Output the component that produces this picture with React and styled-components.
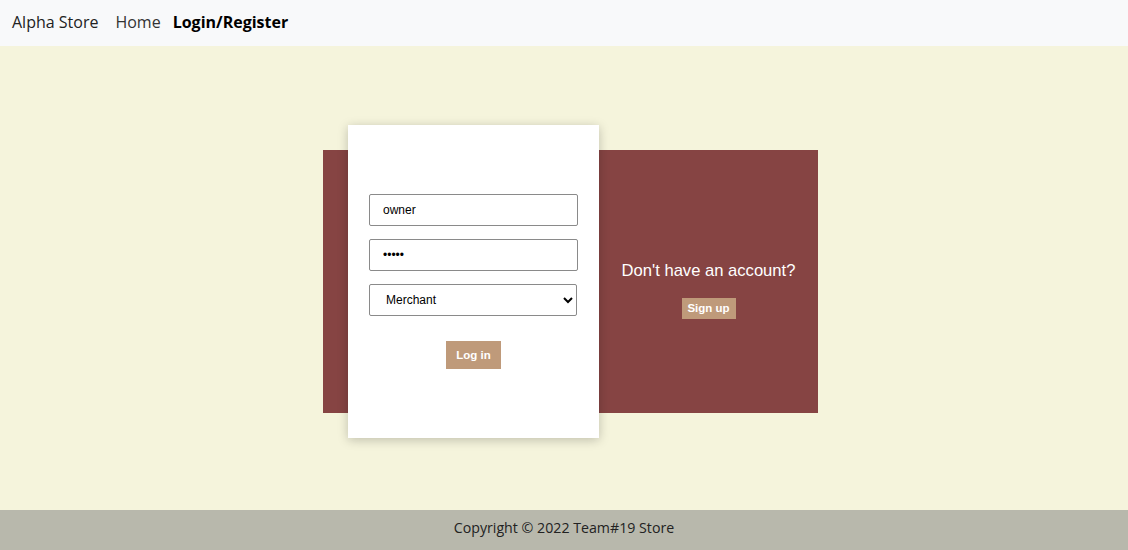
import styled, { createGlobalStyle } from "styled-components";

const GlobalStyle = createGlobalStyle`
  html, body {
    margin: 0;
    padding: 0;
    height: 100%;
  }
  body {
    font-family: "Open Sans", "Liberation Sans", sans-serif;
  }
  #root {
    height: 100%;
  }
`;

const Page = styled.div`
  display: flex;
  flex-direction: column;
  height: 550px;
  background: #f5f4dc;
`;

const NavBar = styled.nav`
  display: flex;
  align-items: center;
  height: 46px;
  padding: 0 12px 2px;
  box-sizing: border-box;
  background: #f8f9fa;
  font-size: 16px;
`;

const Brand = styled.span`
  color: #222;
  margin-right: 17px;
`;

const NavLink = styled.a`
  color: ${({ active }) => (active ? "#000" : "#333")};
  font-weight: ${({ active }) => (active ? 700 : 400)};
  text-decoration: none;
  margin-left: ${({ active }) => (active ? "12px" : "0")};
`;

const Main = styled.main`
  flex: 1;
  display: flex;
  align-items: center;
  justify-content: center;
  padding-left: 13px;
  padding-top: 7px;
`;

const Panel = styled.div`
  display: flex;
  align-items: center;
  width: 495px;
  height: 263px;
  background: #864443;
`;

const Card = styled.div`
  flex: 0 0 auto;
  width: 251px;
  height: 313px;
  box-sizing: border-box;
  margin-left: 25px;
  padding: 69px 21px 0;
  background: #fff;
  box-shadow: 0 2px 10px rgba(0, 0, 0, 0.22);
  display: flex;
  flex-direction: column;
  gap: 13px;
  font-family: "Liberation Sans", Arial, sans-serif;
`;

const Field = styled.input`
  box-sizing: border-box;
  width: 209px;
  height: 32px;
  padding: 0 13px;
  border: 1px solid #8a8a8a;
  border-radius: 2px;
  font-family: "Liberation Sans", Arial, sans-serif;
  font-size: 12px;
  color: #000;
  background: #fff;
  outline: none;
`;

const Select = styled.select`
  box-sizing: border-box;
  width: 208px;
  height: 32px;
  padding: 0 12px;
  border: 1px solid #8a8a8a;
  border-radius: 2px;
  font-family: "Liberation Sans", Arial, sans-serif;
  font-size: 12px;
  color: #000;
  background: #fff;
`;

const Action = styled.button`
  border: none;
  background: #bf9a7a;
  color: #fff;
  font-family: "Liberation Sans", Arial, sans-serif;
  font-weight: 700;
  font-size: 11.5px;
  padding: 0;
  width: ${({ w }) => w}px;
  height: ${({ h }) => h}px;
  cursor: pointer;
`;

const ButtonRow = styled.div`
  display: flex;
  justify-content: center;
  margin-top: 12px;
`;

const Side = styled.div`
  flex: 1;
  display: flex;
  flex-direction: column;
  align-items: center;
  gap: 17px;
  padding-top: 16px;
  font-family: "Liberation Sans", Arial, sans-serif;
`;

const Prompt = styled.h2`
  margin: 0;
  color: #fff;
  font-weight: 400;
  font-size: 16.6px;
`;

const Footer = styled.footer`
  height: 40px;
  display: flex;
  align-items: center;
  justify-content: center;
  padding-bottom: 6px;
  box-sizing: border-box;
  background: #b8b8ac;
  color: #222;
  font-size: 14.2px;
`;

export default function App() {
  return (
    <>
      <GlobalStyle />
      <Page>
        <NavBar>
          <Brand>Alpha Store</Brand>
          <NavLink href="#">Home</NavLink>
          <NavLink href="#" active>
            Login/Register
          </NavLink>
        </NavBar>
        <Main>
          <Panel>
            <Card>
              <Field type="text" defaultValue="owner" />
              <Field type="password" defaultValue="owner" />
              <Select defaultValue="merchant">
                <option value="customer">Customer</option>
                <option value="merchant">Merchant</option>
              </Select>
              <ButtonRow>
                <Action w={55} h={28}>Log in</Action>
              </ButtonRow>
            </Card>
            <Side>
              <Prompt>Don't have an account?</Prompt>
              <Action w={54} h={21}>Sign up</Action>
            </Side>
          </Panel>
        </Main>
        <Footer>Copyright © 2022 Team#19 Store</Footer>
      </Page>
    </>
  );
}
